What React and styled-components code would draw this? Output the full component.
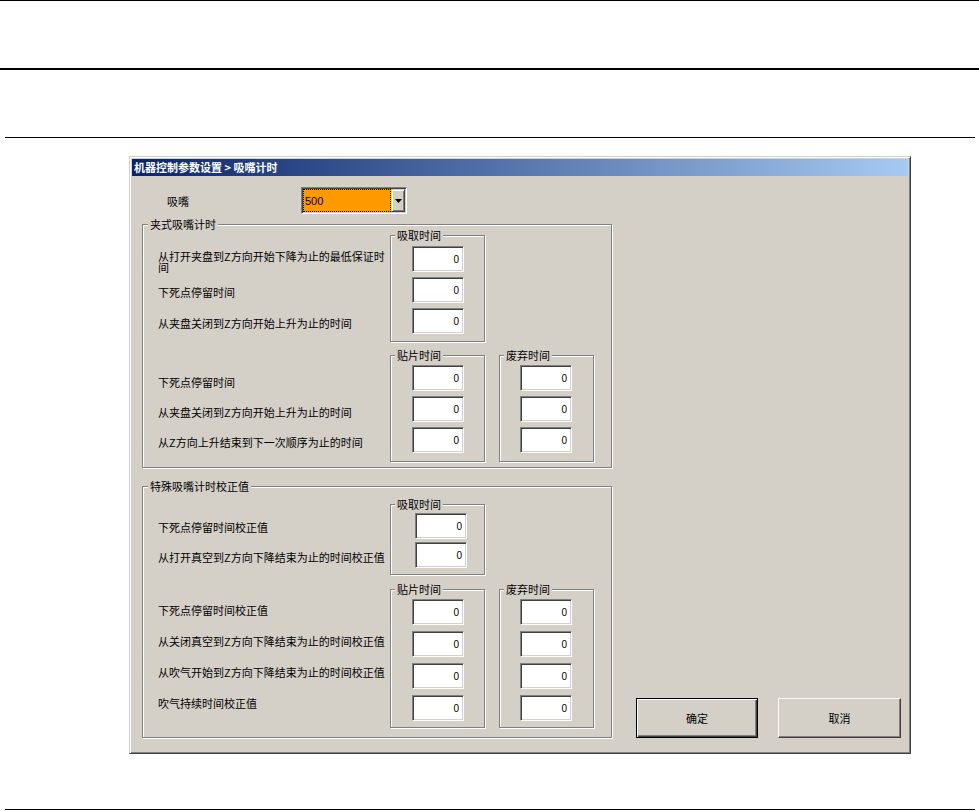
import React from 'react'
import styled, { createGlobalStyle, css } from 'styled-components'

const face = '#d4d0c8'
const shadow = '#808080'
const darkShadow = '#404040'
const cjk = '"Noto Sans CJK SC", "Liberation Sans", sans-serif'
const latin = '"Liberation Sans", "DejaVu Sans", sans-serif'

const GlobalStyle = createGlobalStyle`
  html, body {
    margin: 0;
    padding: 0;
    background: #fff;
  }
  body {
    font-family: ${cjk};
    font-size: 11px;
    color: #000;
  }
`

const Page = styled.div`
  width: 979px;
  height: 811px;
  overflow: hidden;
  background: #fff;
`

const TopBand = styled.div`
  height: 67px;
  border-top: 1px solid #000;
  border-bottom: 2px solid #000;
`

const SubBand = styled.div`
  height: 67px;
  margin: 0 4px 0 5px;
  border-bottom: 1px solid #000;
`

const Main = styled.main`
  padding: 18px 0 0 129px;
`

const BottomRule = styled.div`
  margin: 55px 4px 0 5px;
  border-top: 1px solid #000;
`

const Window = styled.section`
  width: 782px;
  box-sizing: border-box;
  background: ${face};
  border: 1px solid;
  border-color: ${face} ${darkShadow} ${darkShadow} ${face};
  box-shadow: inset 1px 1px 0 #fff, inset -1px -1px 0 ${shadow};
  padding: 2px;
`

const TitleBar = styled.header`
  height: 17px;
  line-height: 17px;
  padding-left: 2px;
  background: linear-gradient(90deg, #0a246a 0%, #a6caf0 100%);
  color: #fff;
  font-weight: bold;
  font-size: 11px;
  white-space: nowrap;
`

const Body = styled.div`
  display: flex;
  align-items: flex-end;
  padding: 11px 8px 13px 10px;
`

const LeftPane = styled.div`
  width: 470px;
  flex: none;
`

const ComboRow = styled.div`
  display: flex;
  align-items: center;
  height: 27px;
  padding-left: 25px;
  margin-bottom: 10px;
`

const ComboLabel = styled.span`
  width: 134px;
`

const Combo = styled.div`
  display: flex;
  width: 106px;
  height: 27px;
  box-sizing: border-box;
  padding: 1px;
  border: 1px solid;
  border-color: ${shadow} #fff #fff ${shadow};
  box-shadow: inset 1px 1px 0 ${darkShadow}, inset -1px -1px 0 ${face};
  background: #fff;
`

const ComboField = styled.div`
  flex: 1;
  display: flex;
  align-items: center;
  padding-left: 1px;
  background: #ff9900;
  border: 1px dotted #000;
  font-family: ${latin};
  font-size: 11px;
`

const ComboButton = styled.div`
  width: 14px;
  flex: none;
  box-sizing: border-box;
  display: flex;
  align-items: center;
  justify-content: center;
  background: ${face};
  border: 1px solid;
  border-color: ${face} ${darkShadow} ${darkShadow} ${face};
  box-shadow: inset 1px 1px 0 #fff, inset -1px -1px 0 ${shadow};
`

const GroupBox = styled.div`
  position: relative;
  width: 470px;
  box-sizing: border-box;
  border: 1px solid ${shadow};
  box-shadow: inset 1px 1px 0 #fff, 1px 1px 0 #fff;
  padding: ${p => p.$padTop}px 0 ${p => p.$padBottom}px 15px;
  display: flex;
  flex-direction: column;
  gap: ${p => p.$gap}px;

  & + & {
    margin-top: 18px;
  }
`

const Legend = styled.span`
  position: absolute;
  top: -8px;
  left: ${p => p.$left}px;
  padding: 0 2px;
  background: ${face};
  line-height: 15px;
  font-size: 11px;
  white-space: nowrap;
`

const Section = styled.div`
  display: flex;
  height: ${p => p.$h}px;
`

const LabelCol = styled.div`
  width: 232px;
  flex: none;
  padding-top: ${p => p.$pad}px;
`

const RowLabel = styled.div`
  height: ${p => p.$h}px;
  display: flex;
  align-items: center;
  line-height: 11px;
`

const BoxRow = styled.div`
  display: flex;
  gap: 14px;
`

const SubGroup = styled.div`
  position: relative;
  width: 95px;
  height: ${p => p.$h}px;
  box-sizing: border-box;
  border: 1px solid ${shadow};
  box-shadow: inset 1px 1px 0 #fff, 1px 1px 0 #fff;
  padding: ${p => p.$padTop}px 0 0 ${p => p.$padLeft}px;
  display: flex;
  flex-direction: column;
  gap: ${p => p.$gap}px;
`

const NumBox = styled.input`
  width: 52px;
  height: 26px;
  flex: none;
  box-sizing: border-box;
  margin: 0;
  padding: 0 4px 0 0;
  border: 1px solid;
  border-color: ${shadow} #fff #fff ${shadow};
  box-shadow: inset 1px 1px 0 ${darkShadow}, inset -1px -1px 0 ${face};
  background: #fff;
  text-align: right;
  font: 10px ${latin};
  color: #000;
  -webkit-text-fill-color: #000;
  outline: none;
`

const ButtonBar = styled.div`
  display: flex;
  gap: 20px;
  margin-left: 24px;
`

const DialogButton = styled.button`
  width: ${p => p.$w}px;
  height: 40px;
  margin: 0;
  padding: 0;
  background: ${face};
  font: 11px ${cjk};
  color: #000;
  border: 1px solid;
  border-color: #fff ${darkShadow} ${darkShadow} #fff;
  box-shadow: inset -1px -1px 0 ${shadow};

  ${p => p.$default && css`
    border-color: #000;
    box-shadow: inset 1px 1px 0 #fff, inset -1px -1px 0 ${darkShadow}, inset -2px -2px 0 ${shadow};
  `}
`

const clampSections = [
  {
    height: 107,
    labelPad: 11,
    rowH: 31,
    labels: [
      '从打开夹盘到Z方向开始下降为止的最低保证时间',
      '下死点停留时间',
      '从夹盘关闭到Z方向开始上升为止的时间',
    ],
    boxes: [{ title: '吸取时间', padTop: 10, padLeft: 21, gap: 5, count: 3 }],
  },
  {
    height: 107,
    labelPad: 12,
    rowH: 30,
    labels: [
      '下死点停留时间',
      '从夹盘关闭到Z方向开始上升为止的时间',
      '从Z方向上升结束到下一次顺序为止的时间',
    ],
    boxes: [
      { title: '贴片时间', padTop: 9, padLeft: 21, gap: 5, count: 3 },
      { title: '废弃时间', padTop: 9, padLeft: 20, gap: 5, count: 3 },
    ],
  },
]

const specialSections = [
  {
    height: 71,
    labelPad: 8,
    rowH: 30,
    labels: ['下死点停留时间校正值', '从打开真空到Z方向下降结束为止的时间校正值'],
    boxes: [{ title: '吸取时间', padTop: 8, padLeft: 24, gap: 3, count: 2 }],
  },
  {
    height: 139,
    labelPad: 6,
    rowH: 31,
    labels: [
      '下死点停留时间校正值',
      '从关闭真空到Z方向下降结束为止的时间校正值',
      '从吹气开始到Z方向下降结束为止的时间校正值',
      '吹气持续时间校正值',
    ],
    boxes: [
      { title: '贴片时间', padTop: 9, padLeft: 21, gap: 6, count: 4 },
      { title: '废弃时间', padTop: 9, padLeft: 20, gap: 6, count: 4 },
    ],
  },
]

const TimingSection = ({ section }) => (
  <Section $h={section.height}>
    <LabelCol $pad={section.labelPad}>
      {section.labels.map((text, i) => (
        <RowLabel key={i} $h={section.rowH}>{text}</RowLabel>
      ))}
    </LabelCol>
    <BoxRow>
      {section.boxes.map(box => (
        <SubGroup
          key={box.title}
          $h={section.height}
          $padTop={box.padTop}
          $padLeft={box.padLeft}
          $gap={box.gap}
        >
          <Legend $left={4}>{box.title}</Legend>
          {Array.from({ length: box.count }).map((_, i) => (
            <NumBox key={i} readOnly value="0" />
          ))}
        </SubGroup>
      ))}
    </BoxRow>
  </Section>
)

const App = () => (
  <Page>
    <GlobalStyle />
    <TopBand />
    <SubBand />
    <Main>
      <Window>
        <TitleBar>机器控制参数设置 &gt; 吸嘴计时</TitleBar>
        <Body>
          <LeftPane>
            <ComboRow>
              <ComboLabel>吸嘴</ComboLabel>
              <Combo>
                <ComboField>500</ComboField>
                <ComboButton>
                  <svg width="7" height="4" viewBox="0 0 7 4">
                    <path d="M0 0h7L3.5 4z" fill="#000" />
                  </svg>
                </ComboButton>
              </Combo>
            </ComboRow>

            <GroupBox $padTop={10} $padBottom={5} $gap={13}>
              <Legend $left={5}>夹式吸嘴计时</Legend>
              {clampSections.map((s, i) => (
                <TimingSection key={i} section={s} />
              ))}
            </GroupBox>

            <GroupBox $padTop={17} $padBottom={9} $gap={14}>
              <Legend $left={5}>特殊吸嘴计时校正值</Legend>
              {specialSections.map((s, i) => (
                <TimingSection key={i} section={s} />
              ))}
            </GroupBox>
          </LeftPane>

          <ButtonBar>
            <DialogButton $w={122} $default>确定</DialogButton>
            <DialogButton $w={123}>取消</DialogButton>
          </ButtonBar>
        </Body>
      </Window>
    </Main>
    <BottomRule />
  </Page>
)

export default App
